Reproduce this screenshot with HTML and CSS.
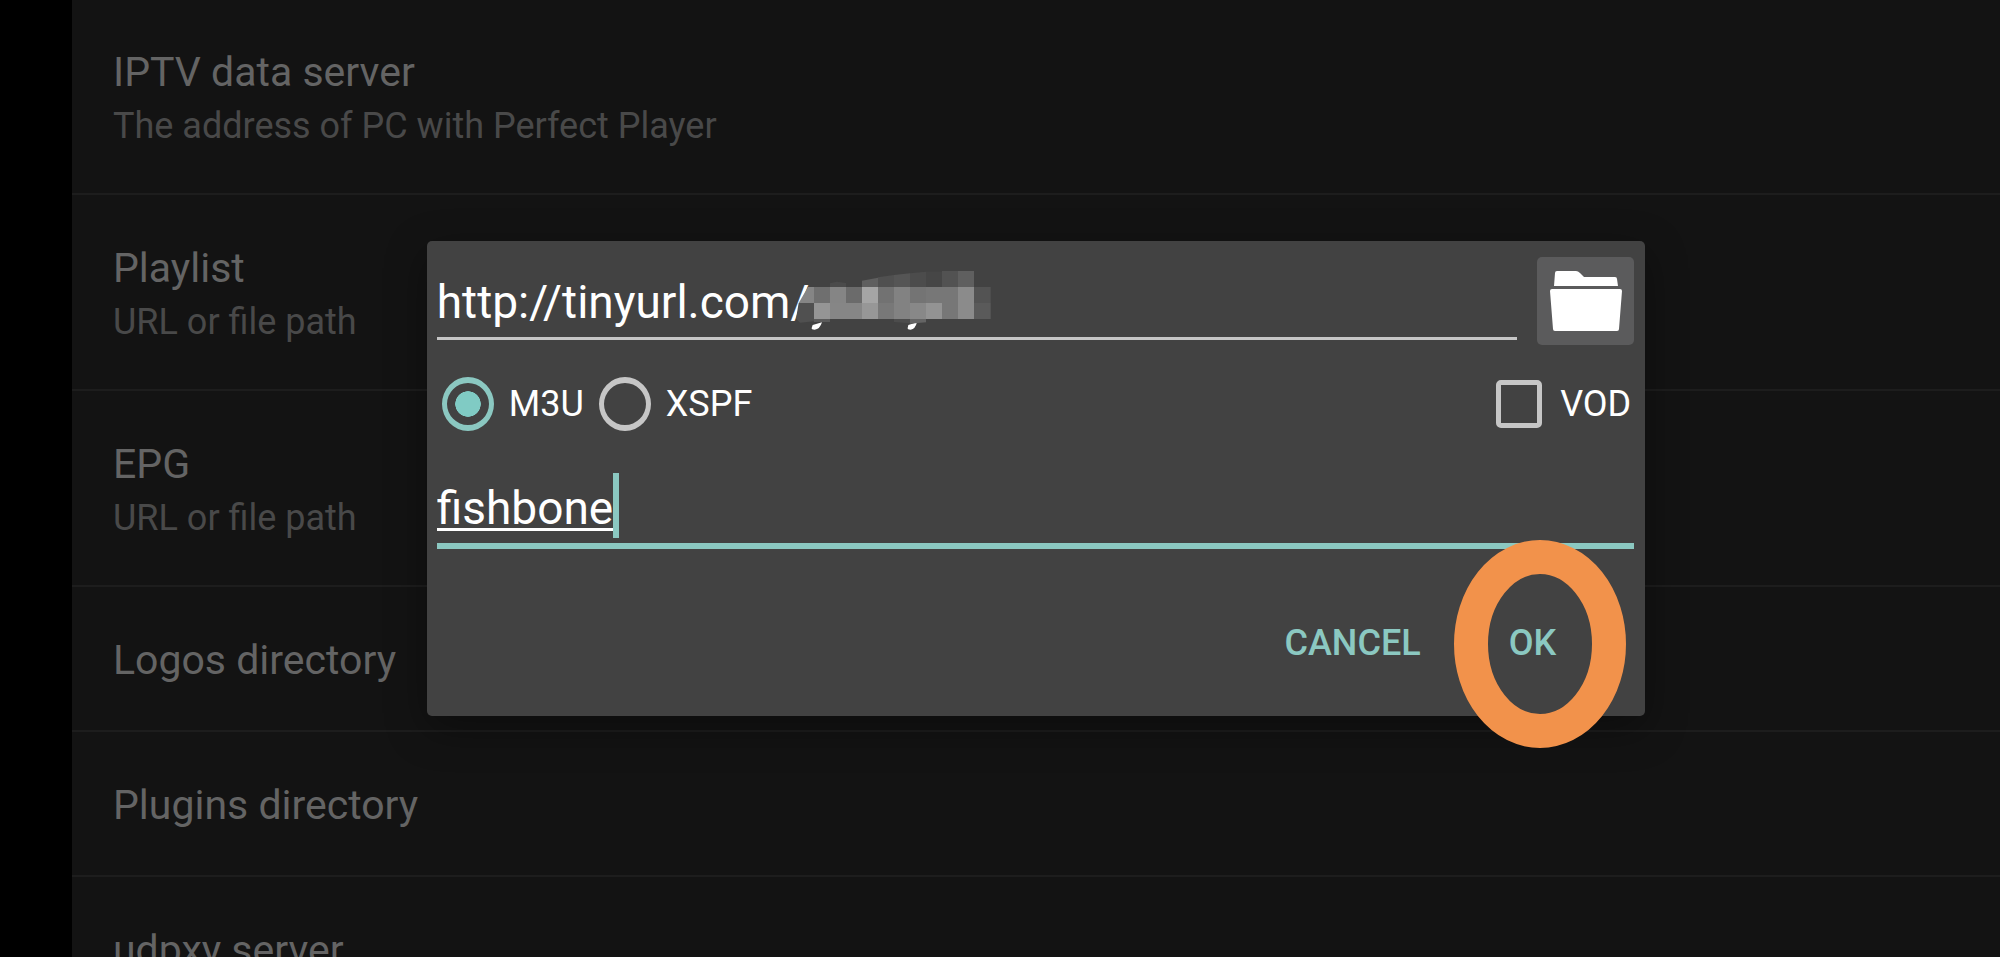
FILE: index.html
```html
<!DOCTYPE html>
<html lang="en">
<head>
<meta charset="utf-8">
<title>Playlist settings</title>
<link rel="stylesheet" href="styles.css">
</head>
<body>
<main class="screen">
  <ul class="settings">
    <li class="item"><div class="item-title">IPTV data server</div><div class="item-note">The address of PC with Perfect Player</div></li>
    <li class="item"><div class="item-title">Playlist</div><div class="item-note">URL or file path</div></li>
    <li class="item"><div class="item-title">EPG</div><div class="item-note">URL or file path</div></li>
    <li class="item"><div class="item-title">Logos directory</div></li>
    <li class="item"><div class="item-title">Plugins directory</div></li>
    <li class="item"><div class="item-title">udpxy server</div></li>
  </ul>
  <div class="overlay">
    <form class="dialog" role="dialog" aria-label="Playlist">
      <div class="url-row">
        <div class="url-field">
          <input class="text-input url-input" type="text" value="http://tinyurl.com/" aria-label="Playlist URL">
          <svg class="mosaic" viewBox="0 0 690 240" aria-hidden="true">
            <path fill="#fff" d="M98 195L126 187Q119 209 104 209Q94 209 95 204ZM385 195L411 187Q405 209 392 209Q382 209 383 204Z"/>
            <path fill="#4b4b4b" d="M150 70L170 65L198 69V81H150Z"/>
            <path fill="#5f5f5f" d="M246 62L294 53V81H246Z"/>
            <path fill="#505050" d="M294 52L342 45V81H294Z"/>
            <path fill="#555" d="M342 45L390 40V81H342Z"/>
            <path fill="#4c4c4c" d="M390 40L438 35V81H390Z"/>
            <path fill="#464646" d="M438 35H486V81H438Z"/>
            <path fill="#525252" d="M486 33H534V81H486Z"/>
            <path fill="#5f5f5f" d="M534 33H582V81H534Z"/>
            <path fill="#858585" d="M84 81H102V129H56Z"/>
            <path fill="#6f6f6f" d="M102 81H150V129H102Z"/>
            <path fill="#858585" d="M150 81H198V129H150Z"/>
            <path fill="#6b6b6b" d="M198 81H246V129H198Z"/>
            <path fill="#a5a5a5" d="M246 81H294V129H246Z"/>
            <path fill="#727272" d="M294 81H342V129H294Z"/>
            <path fill="#828282" d="M342 81H390V129H342Z"/>
            <path fill="#747474" d="M390 81H438V129H390Z"/>
            <path fill="#777" d="M438 81H534V129H438Z"/>
            <path fill="#8b8b8b" d="M534 81H582V177H534Z"/>
            <path fill="#535353" d="M582 81H632V129H582Z"/>
            <path fill="#505050" d="M56 129H102V184L60 188L48 176Z"/>
            <path fill="#959595" d="M102 129H150V177H102Z"/>
            <path fill="#868686" d="M150 129H246V177H150Z"/>
            <path fill="#979797" d="M246 129H294V177H246Z"/>
            <path fill="#787878" d="M294 129H342V177H294Z"/>
            <path fill="#828282" d="M342 129H390V177H342Z"/>
            <path fill="#888" d="M390 129H438V177H390Z"/>
            <path fill="#939393" d="M438 129H486V177H438Z"/>
            <path fill="#777" d="M486 129H534V177H486Z"/>
            <path fill="#5a5a5a" d="M582 129H632V177H582ZM102 177H150V186H102Z"/>
            <path fill="#4c4c4c" d="M342 177H390V190L342 186Z"/>
            <path fill="#646464" d="M390 177H438V187L390 191Z"/>
          </svg>
        </div>
        <button class="browse" type="button" aria-label="Browse files">
          <svg class="folder" viewBox="0 0 72 62" aria-hidden="true">
            <path fill="#fff" d="M4 16L5 3Q5 1 7 1H26Q28 1 30 3L34 7H65Q67 7 67 9L68 16ZM2 19H70Q72 19 72 21L69 59Q69 61 67 61H5Q3 61 3 59L0 21Q0 19 2 19Z"/>
          </svg>
        </button>
      </div>
      <div class="options">
        <label class="option"><input class="radio" type="radio" name="format" checked>M3U</label>
        <label class="option"><input class="radio" type="radio" name="format">XSPF</label>
        <label class="option option-end"><input class="checkbox" type="checkbox">VOD</label>
      </div>
      <div class="name-field">
        <input class="text-input name-input" type="text" value="fishbone" aria-label="Playlist name" spellcheck="false">
        <span class="caret"></span>
      </div>
      <div class="actions">
        <button class="action" type="button">CANCEL</button>
        <button class="action action-ok" type="button">OK
          <svg class="ring" viewBox="0 0 172 208" aria-hidden="true"><ellipse cx="86" cy="104" rx="69" ry="87" fill="none" stroke="#f2924b" stroke-width="34"/></svg>
        </button>
      </div>
    </form>
  </div>
</main>
</body>
</html>
```
FILE: styles.css
```css
* { box-sizing: border-box; }

body {
  margin: 0;
  background: #000;
  font-family: Roboto, "Liberation Sans", sans-serif;
  color: #fff;
}

.screen {
  position: relative;
  height: 100vh;
  margin-left: 72px;
  overflow: hidden;
  background: #131313;
}

.settings {
  margin: -1px 0 0;
  padding: 0;
  list-style: none;
}

.item {
  padding: 49px 41px 46px;
  border-bottom: 2px solid #1d1d1d;
}

.item-title {
  font-size: 41px;
  line-height: 48px;
  color: #646464;
}

.item-note {
  margin-top: 9px;
  font-size: 36px;
  line-height: 42px;
  color: #494949;
}

.overlay {
  position: absolute;
  inset: 0;
  display: flex;
  align-items: center;
  justify-content: center;
}

.dialog {
  width: 63.2%;
  padding: 16px 11px 52px 10px;
  border-radius: 5px;
  background: #424242;
  box-shadow: 0 12px 40px rgba(0, 0, 0, 0.35);
}

.url-row {
  display: flex;
  align-items: flex-start;
  gap: 20px;
}

.url-field {
  position: relative;
  flex: 1;
  border-bottom: 3px solid #c6c6c6;
}

.text-input {
  display: block;
  height: 54px;
  padding: 0;
  border: 0;
  outline: 0;
  background: none;
  color: #fff;
  font-family: inherit;
  font-size: 46px;
  line-height: 54px;
}

.url-input {
  width: 100%;
  margin: 18px 0 8px;
}

.mosaic {
  position: absolute;
  left: 343px;
  top: 3px;
  width: 230px;
  height: 80px;
  pointer-events: none;
}

.browse {
  display: flex;
  align-items: center;
  justify-content: center;
  width: 97px;
  height: 88px;
  padding: 0;
  border: 0;
  border-radius: 5px;
  background: #5b5b5c;
}

.folder {
  width: 72px;
  height: 62px;
}

.options {
  display: flex;
  align-items: center;
  gap: 15px;
  margin-top: 32px;
  padding: 0 3px 0 5px;
}

.option {
  display: flex;
  align-items: center;
  gap: 15px;
  font-size: 36px;
  line-height: 42px;
}

.option-end {
  gap: 18px;
  margin-left: auto;
}

.radio,
.checkbox {
  appearance: none;
  margin: 0;
  border: 5px solid #c6c6c6;
}

.radio {
  width: 52px;
  height: 54px;
  border-width: 6px 5px;
  border-radius: 50%;
}

.radio:checked {
  border-color: #8bc8c1;
  background: radial-gradient(ellipse 13px 13px at center, #80cbc4 96%, transparent);
}

.checkbox {
  width: 46px;
  height: 48px;
  border-radius: 5px;
}

.name-field {
  display: flex;
  align-items: flex-start;
  margin-top: 42px;
  border-bottom: 6px solid #8bc8c1;
}

.name-input {
  width: 176px;
  margin: 8px 0;
  text-decoration: underline 3px;
  text-decoration-skip-ink: none;
  text-underline-offset: 4px;
}

.caret {
  width: 6px;
  height: 65px;
  background: #8bc8c1;
}

.actions {
  display: flex;
  justify-content: flex-end;
  margin-top: 73px;
  padding-right: 34px;
}

.action {
  padding: 0 44px;
  border: 0;
  background: none;
  color: #8bc8c1;
  font-family: inherit;
  font-size: 36px;
  font-weight: 500;
  line-height: 42px;
}

.action-ok {
  position: relative;
}

.ring {
  position: absolute;
  left: -11px;
  top: -82px;
  width: 172px;
  height: 208px;
  pointer-events: none;
}
```
